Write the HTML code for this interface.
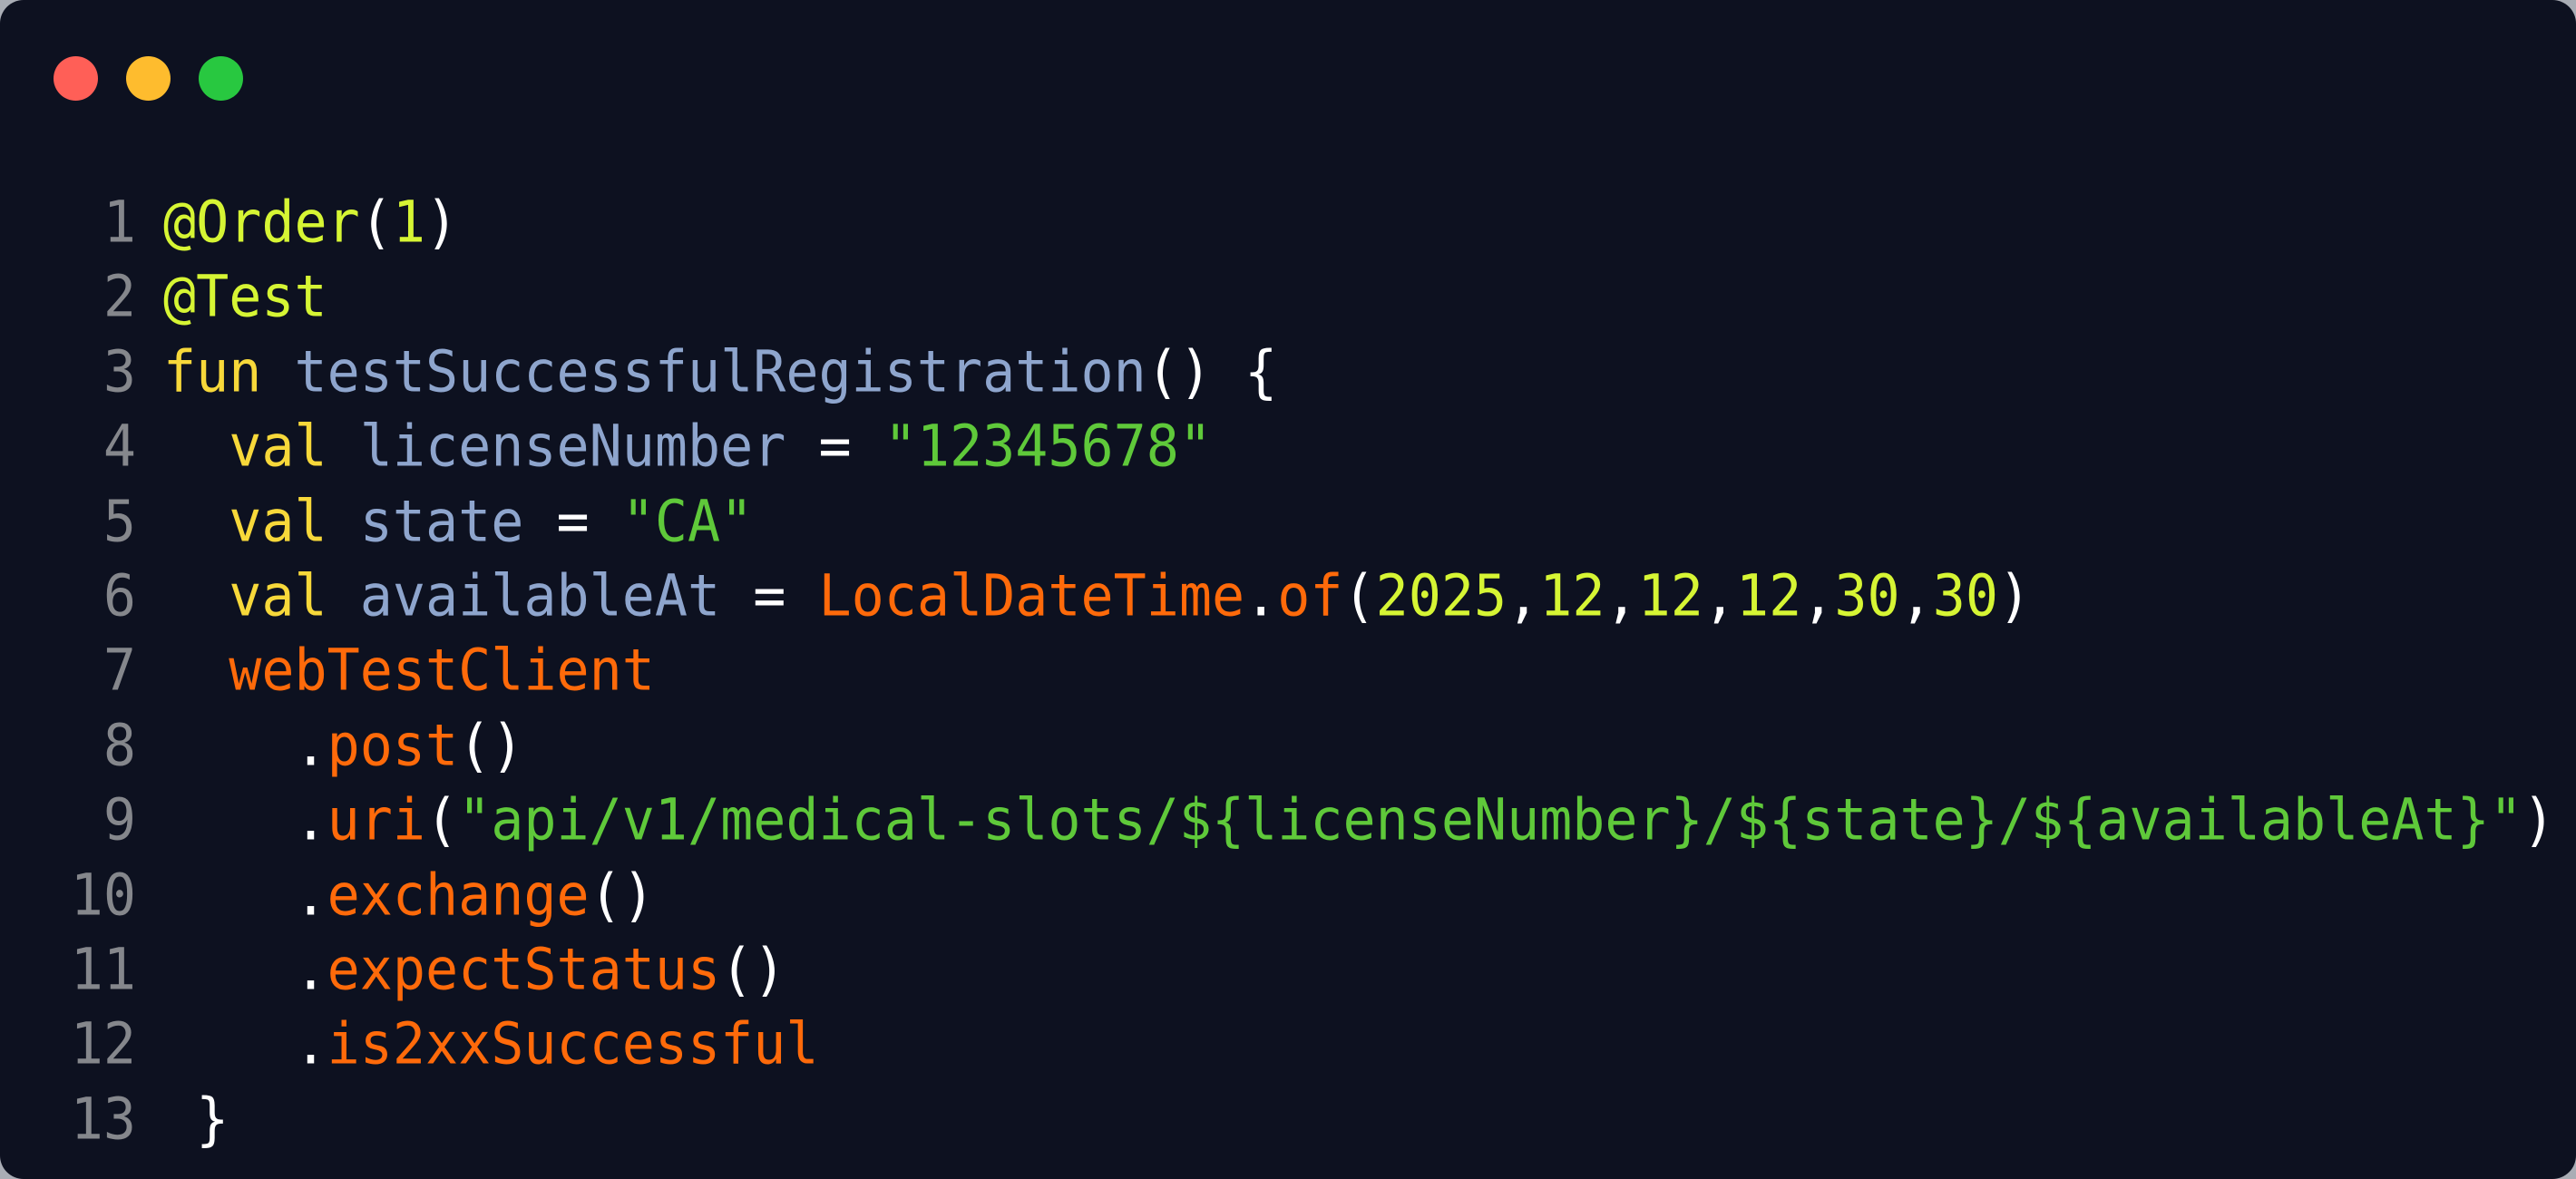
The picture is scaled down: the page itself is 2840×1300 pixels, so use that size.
<!DOCTYPE html>
<html><head><meta charset="utf-8"><style>
html,body{margin:0;padding:0;background:#a9adb5;}
.win{position:absolute;left:0;top:0;width:2840px;height:1300px;background:#0d1120;border-radius:26px;overflow:hidden;}
.dot{position:absolute;width:49px;height:49px;border-radius:50%;top:62px;}
.code{position:absolute;left:0;top:205px;width:2840px;font-family:"DejaVu Sans Mono","Liberation Mono",monospace;font-size:60px;line-height:82.4px;}
.l{position:relative;height:82.4px;}
.n{position:absolute;left:42px;width:108px;text-align:right;color:#85878c;white-space:pre;}
.c{position:absolute;left:180px;color:#fff;white-space:pre;}
.n,.c{display:inline-block;transform:scaleY(1.06);transform-origin:0 60%;}
.a{color:#d6f534}.k{color:#f7d83a}.i{color:#8ea5cd}.s{color:#5fc93a}.o{color:#ff6a0a}
</style></head><body><div class="win">
<div class="dot" style="left:59px;background:#ff5f57;"></div>
<div class="dot" style="left:139px;background:#febc2e;"></div>
<div class="dot" style="left:219px;background:#28c840;"></div>
<div class="code"><div class="l"><span class="n">1</span><span class="c"><span class="a">@Order</span>(<span class="a">1</span>)</span></div><div class="l"><span class="n">2</span><span class="c"><span class="a">@Test</span></span></div><div class="l"><span class="n">3</span><span class="c"><span class="k">fun</span> <span class="i">testSuccessfulRegistration</span>() {</span></div><div class="l"><span class="n">4</span><span class="c">  <span class="k">val</span> <span class="i">licenseNumber</span> = <span class="s">"12345678"</span></span></div><div class="l"><span class="n">5</span><span class="c">  <span class="k">val</span> <span class="i">state</span> = <span class="s">"CA"</span></span></div><div class="l"><span class="n">6</span><span class="c">  <span class="k">val</span> <span class="i">availableAt</span> = <span class="o">LocalDateTime</span>.<span class="o">of</span>(<span class="a">2025</span>,<span class="a">12</span>,<span class="a">12</span>,<span class="a">12</span>,<span class="a">30</span>,<span class="a">30</span>)</span></div><div class="l"><span class="n">7</span><span class="c">  <span class="o">webTestClient</span></span></div><div class="l"><span class="n">8</span><span class="c">    .<span class="o">post</span>()</span></div><div class="l"><span class="n">9</span><span class="c">    .<span class="o">uri</span>(<span class="s">"api/v1/medical-slots/${licenseNumber}/${state}/${availableAt}"</span>)</span></div><div class="l"><span class="n">10</span><span class="c">    .<span class="o">exchange</span>()</span></div><div class="l"><span class="n">11</span><span class="c">    .<span class="o">expectStatus</span>()</span></div><div class="l"><span class="n">12</span><span class="c">    .<span class="o">is2xxSuccessful</span></span></div><div class="l"><span class="n">13</span><span class="c"> }</span></div></div>
</div></body></html>
